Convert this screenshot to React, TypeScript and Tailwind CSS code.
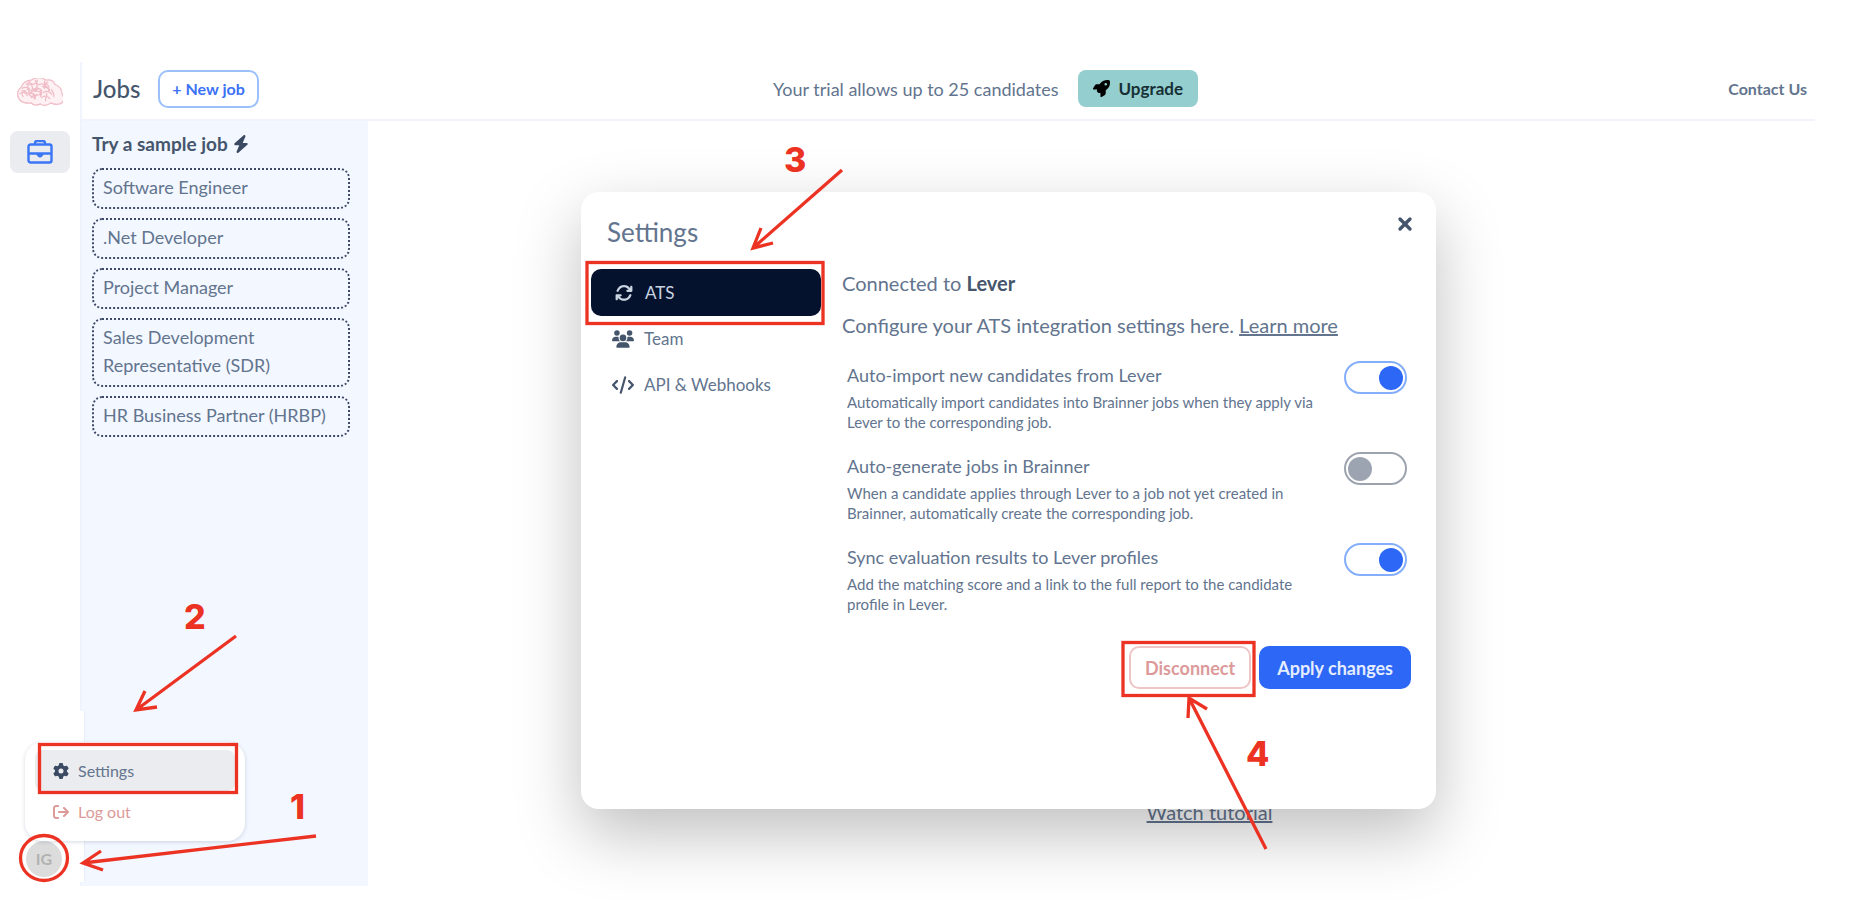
import { useState } from "react";
import {
  FaArrowRightFromBracket, FaArrowsRotate, FaBolt, FaCode, FaGear, FaRocket, FaUsers,
} from "react-icons/fa6";
import { X } from "lucide-react";

const SAMPLE_JOBS = [
  "Software Engineer",
  ".Net Developer",
  "Project Manager",
  "Sales Development Representative (SDR)",
  "HR Business Partner (HRBP)",
];

const OPTIONS = [
  {
    id: "auto-import",
    title: "Auto-import new candidates from Lever",
    text: "Automatically import candidates into Brainner jobs when they apply via Lever to the corresponding job.",
    on: true,
  },
  {
    id: "auto-generate",
    title: "Auto-generate jobs in Brainner",
    text: "When a candidate applies through Lever to a job not yet created in Brainner, automatically create the corresponding job.",
    on: false,
  },
  {
    id: "sync-results",
    title: "Sync evaluation results to Lever profiles",
    text: "Add the matching score and a link to the full report to the candidate profile in Lever.",
    on: true,
  },
];

export default function App() {
  return (
    <div className="relative flex min-h-screen overflow-hidden bg-white pt-[62px] pr-[39px] pb-[14px] font-['Lato',sans-serif] text-slate-600">
      <Sidebar />
      <div className="flex min-w-0 flex-1 flex-col">
        <TopBar />
        <div className="flex flex-1">
          <JobsPanel />
          <main className="flex flex-1 items-end justify-center pr-[38px] pb-[62px]">
            <a href="#tutorial" className="ml-[274px] text-xl leading-6 text-slate-500 underline">Watch tutorial</a>
          </main>
        </div>
      </div>
      <SettingsModal />
      <UserMenu />
      <Annotations />
    </div>
  );
}

function Sidebar() {
  return (
    <nav className="relative flex w-20 shrink-0 flex-col items-center justify-between">
      <div className="flex flex-col items-center">
        <BrainLogo />
        <a href="#jobs" aria-label="Jobs" className="mt-6 flex h-[42px] w-[60px] items-center justify-center rounded-lg bg-[#ebecef]">
          <BriefcaseIcon />
        </a>
      </div>
      <button aria-label="Account" className="mr-[-8px] mb-[9px] flex size-9 items-center justify-center rounded-full bg-[#dcdcdc] text-base font-bold text-[#b2b2b2]">
        IG
      </button>
      <span aria-hidden className="absolute bottom-1 left-full h-[171px] w-[5px] border-r border-[#e6edfb] bg-white" />
    </nav>
  );
}

function TopBar() {
  return (
    <header className="flex h-[59px] items-center justify-between border-b-2 border-l-2 border-[#f1f4fc] pr-2 pb-1 pl-[11px]">
      <div className="flex items-center gap-[18px]">
        <h1 className="text-2xl leading-7 font-medium text-slate-600">Jobs</h1>
        <button className="h-[38px] rounded-[10px] border-2 border-[#9cc0fb] px-3 text-base font-bold text-[#3b71f5]">
          + New job
        </button>
      </div>
      <div className="mr-4 flex items-center gap-5">
        <span className="text-lg text-slate-500">Your trial allows up to 25 candidates</span>
        <button className="flex h-[37px] items-center gap-2 rounded-lg bg-[#94cecf] px-[15px] text-[17px] font-bold text-[#173035]">
          <FaRocket className="size-[17px] text-black" />
          Upgrade
        </button>
      </div>
      <a href="#contact" className="text-base font-bold text-slate-500">Contact Us</a>
    </header>
  );
}

function JobsPanel() {
  return (
    <aside className="w-[288px] shrink-0 border-l-2 border-[#eef3fd] bg-[#f3f7ff] pr-[18px] pl-[10px]">
      <h2 className="flex items-center gap-1 pt-[9px] text-[19px] leading-7 font-bold text-slate-600">
        Try a sample job <FaBolt className="size-[18px] text-[#3b4a63]" />
      </h2>
      <ul className="mt-[10px] flex flex-col gap-[9px]">
        {SAMPLE_JOBS.map((job) => (
          <li key={job}>
            <button className="block w-full rounded-[10px] border-2 border-dotted border-[#3f4a68] px-[9px] pt-[3px] pb-[6px] text-left text-lg leading-7 text-slate-500">
              {job}
            </button>
          </li>
        ))}
      </ul>
    </aside>
  );
}

function SettingsModal() {
  return (
    <div role="dialog" aria-label="Settings" className="absolute top-[192px] left-[581px] w-[855px] rounded-[18px] bg-white pr-[25px] pb-[120px] pl-[10px] text-slate-500 shadow-[0_25px_65px_rgba(0,0,0,0.25)]">
      <div className="flex items-start justify-between pt-[22px] pl-4">
        <h2 className="pt-[2px] text-[26px] leading-8">Settings</h2>
        <button aria-label="Close" className="-mr-[4px] text-slate-600">
          <X className="size-5" strokeWidth={4} />
        </button>
      </div>
      <div className="flex gap-[21px]">
        <nav className="w-[230px] shrink-0 pt-[21px] text-[17px]">
          <a href="#ats" className="flex h-[47px] items-center gap-3 rounded-[10px] bg-[#05122d] pl-6 text-slate-300">
            <FaArrowsRotate className="size-[18px]" />
            ATS
          </a>
          <a href="#team" className="flex h-[46px] items-center gap-[10px] pl-[21px]">
            <FaUsers className="size-[22px] text-slate-600" />
            Team
          </a>
          <a href="#api" className="flex h-[46px] items-center gap-[10px] pl-[21px]">
            <FaCode className="size-[22px] text-slate-600" />
            API &amp; Webhooks
          </a>
        </nav>
        <div className="flex-1 pt-[21px] text-xl">
          <p className="leading-7">
            Connected to <b className="text-slate-600">Lever</b>
          </p>
          <p className="mt-[14px] leading-7">
            Configure your ATS integration settings here.{" "}
            <a href="#learn" className="underline">Learn more</a>
          </p>
          <div className="mt-[22px] flex flex-col gap-5 pl-[5px]">
            {OPTIONS.map((o) => (
              <Option key={o.id} {...o} />
            ))}
          </div>
          <div className="mt-8 flex justify-end gap-2 text-lg font-bold">
            <button className="h-[43px] rounded-[10px] border-2 border-[#eec5c5] px-[14px] text-[#dc9a9a]">
              Disconnect
            </button>
            <button className="h-[43px] rounded-[10px] bg-[#2c67f6] px-[18px] text-[#e4edff]">
              Apply changes
            </button>
          </div>
        </div>
      </div>
    </div>
  );
}

function Option({ id, title, text, on }: { id: string; title: string; text: string; on: boolean }) {
  const [checked, setChecked] = useState(on);
  return (
    <div className="flex items-start justify-between pr-1">
      <div className="w-[484px]">
        <label htmlFor={id} className="block text-lg leading-7">{title}</label>
        <p className="mt-[3px] text-[15px] leading-5">{text}</p>
      </div>
      <input
        id={id}
        type="checkbox"
        role="switch"
        checked={checked}
        onChange={() => setChecked(!checked)}
        className="flex h-[33px] w-[63px] appearance-none items-center rounded-full border-2 border-[#9ca3af] px-[2px] before:size-6 before:rounded-full before:bg-[#9ca3b1] checked:justify-end checked:border-[#84aefb] checked:before:bg-[#2c67f6]"
      />
    </div>
  );
}

function UserMenu() {
  return (
    <div className="absolute bottom-[59px] left-[25px] w-[220px] rounded-[18px] bg-white px-[10px] py-2 text-base shadow-[0_1px_4px_rgba(30,50,90,0.18)]">
      <button className="flex h-[41px] w-full items-center gap-[9px] rounded-lg bg-[#ebecef] pl-[18px] text-slate-500">
        <FaGear className="size-4 text-[#3b4a63]" />
        Settings
      </button>
      <button className="flex h-[42px] w-full items-center gap-[9px] pl-[18px] text-[#dc9a9a]">
        <FaArrowRightFromBracket className="size-4" />
        Log out
      </button>
    </div>
  );
}

function Annotations() {
  return (
    <svg className="pointer-events-none absolute top-0 left-0" width="1854" height="900" viewBox="0 0 1854 900" fill="none" stroke="#ec3323" strokeWidth="3.300">
      <rect x="39.500" y="744.500" width="197" height="48" />
      <rect x="587" y="262.500" width="236" height="61" />
      <rect x="1123" y="642.500" width="131" height="53" />
      <ellipse cx="44" cy="858" rx="23.500" ry="22.500" />
      <path d="M316 836 83 863M101 851 83 863 103 870" />
      <path d="M236 636 136 710M145 691 136 710 157 707" />
      <path d="M842 170 753 248M761 228 753 248 773 243" />
      <path d="M1266 849 1189 698M1188 718 1189 698 1207 709" />
      <g className="font-['Inter',sans-serif] text-[34px] font-extrabold" fill="#ec3323" stroke="none">
        <text x="290" y="819">1</text>
        <text x="184" y="629">2</text>
        <text x="784" y="172">3</text>
        <text x="1246" y="766">4</text>
      </g>
    </svg>
  );
}

function BriefcaseIcon() {
  return (
    <svg width="26" height="24" viewBox="0 0 26 24" fill="none" stroke="#3b76f6" strokeWidth="2.400" strokeLinejoin="round">
      <rect x="1.500" y="4.500" width="23" height="18" rx="2" />
      <path d="M8 4.500V3a2 2 0 0 1 2-2h6a2 2 0 0 1 2 2v1.500M1.500 13.500h23" />
      <path d="M10 14h6c0 4-6 4-6 0Z" fill="#3b76f6" strokeWidth="1" />
    </svg>
  );
}

function BrainLogo() {
  return (
    <svg className="mt-4" width="46" height="29" viewBox="1 1 45 28" preserveAspectRatio="none" fill="none" stroke="#f0bcc6" strokeWidth="1.200" strokeLinecap="round" strokeLinejoin="round">
      <path fill="#fdf1f3" d="M3 21C0 17 2 12 5 10 6 6 10 3 15 3c4-3 11-3 14 0 5-1 8 1 9 4 5 2 7 5 7 9 3 4 2 9-2 10-4 1-7 0-9-1-3 3-8 3-10 1-4 2-8 1-9-1-5 1-11-1-12-4Z" />
      <path d="M6 11c3-2 6-1 7 2m-4 0c-3 1-4 4-2 6m3-12c3-1 6 0 6 3s4 4 6 1m-9-7c1 3 4 4 6 2m0-3c0 4 3 5 5 4s5 0 5 3m2-5c-2 1-3 3-2 5m-16 1c-2 3 0 5 3 5s4 3 2 5m-14-5c3-2 6-1 7 2m2-5c4 0 5-3 9-2s4 4 2 6m2-8c3-1 6 1 6 4m-14 1c3-1 6 0 7 3m-10 3c1-2 3-3 5-2m7-3c3-2 7-1 8 2m-10 3c2-2 6-2 8 1m-6-11c3-1 5 1 6 3m-8 2c-1 2-3 3-5 2" />
      <path d="M12 5c-1 3 1 5-1 7m10-9c-2 3 1 5-1 8s-6 2-7 6m15-13c-1 3 2 4 0 7m-22 2c3 2 5 1 7 4s4 1 6 4m5-9c-1 3 1 4 0 7m6-3c1 3-2 4-1 7m6-11c0 3 3 3 2 7m-9-13c3 1 5 3 4 6m-17 3c2 1 4 3 3 6" />
    </svg>
  );
}
